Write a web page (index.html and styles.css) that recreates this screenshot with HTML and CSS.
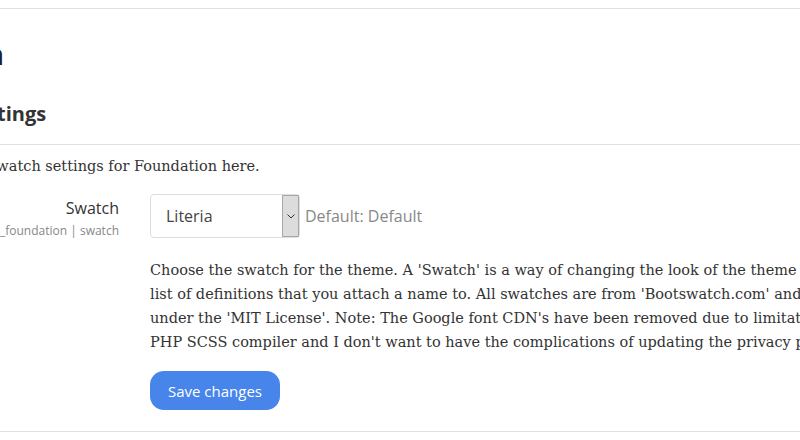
FILE: index.html
```html
<!DOCTYPE html>
<html lang="en">
<head>
  <meta charset="UTF-8" />
  <meta name="viewport" content="width=device-width, initial-scale=1.0"/>
  <title>Foundation - Swatch settings</title>
  <link rel="stylesheet" href="styles.css">
</head>
<body>

  <div class="pagina">
    <h2 class="titulo">Foundation</h2>

    <h3 class="subtitulo">Swatch settings</h3>
    <div class="intro">
      <p>Configure the swatch settings for Foundation here.</p>
    </div>

    <div class="fila">
      <div class="etiqueta">
        <label for="swatch">Swatch</label>
        <span class="nombre">theme_foundation | swatch</span>
      </div>
      <div class="control">
        <div class="campo">
          <div class="selector" id="swatch">
            <span class="valor">Literia</span>
            <span class="flecha">
              <svg width="8" height="5" viewBox="0 0 8 5"><path d="M0.5 0.5 L4 4 L7.5 0.5" fill="none" stroke="#333" stroke-width="1"/></svg>
            </span>
          </div>
          <span class="defecto">Default: Default</span>
        </div>
        <p class="descripcion">
          Choose the swatch for the theme. A 'Swatch' is a way of changing the look of the theme using a preset<br>
          list of definitions that you attach a name to. All swatches are from 'Bootswatch.com' and licensed<br>
          under the 'MIT License'. Note: The Google font CDN's have been removed due to limitations of the<br>
          PHP SCSS compiler and I don't want to have the complications of updating the privacy policy.
        </p>
      </div>
    </div>

    <div class="fila acciones">
      <div></div>
      <div>
        <button>Save changes</button>
      </div>
    </div>
  </div>

</body>
</html>
```

FILE: styles.css
```css
html, body {
  overflow: hidden;
}

body {
  margin: 0;
  font-family: 'Open Sans', sans-serif;
  color: #333;
  background: white;
}

.pagina {
  margin-top: 8px;
  margin-left: -117px;
  width: 1100px;
  border-top: 1px solid #dee2e6;
  border-bottom: 1px solid #dee2e6;
}

.titulo {
  margin: 26px 0 0 -34px;
  font-size: 28px;
  font-weight: 600;
  color: #1d2125;
}

.subtitulo {
  margin: 27px 0 0 6px;
  font-size: 20px;
  font-weight: 700;
  color: #333;
}

.intro {
  margin-top: 17px;
  border-top: 1px solid #dee2e6;
  padding-top: 9px;
}

.intro p, .descripcion {
  margin: 0;
  font-family: 'DejaVu Serif', serif;
  font-size: 14.5px;
  line-height: 24px;
  color: #333;
}

.fila {
  display: grid;
  grid-template-columns: 236px 1fr;
  column-gap: 31px;
  margin-top: 16px;
}

.etiqueta {
  display: flex;
  flex-direction: column;
  align-items: flex-end;
  padding-top: 3px;
}

.etiqueta label {
  font-size: 16px;
  color: #333;
}

.nombre {
  font-size: 12px;
  color: #888;
  margin-top: 3px;
}

.campo {
  display: flex;
  align-items: center;
  gap: 5px;
}

.selector {
  display: flex;
  width: 148px;
  height: 42px;
  border: 1px solid #ddd;
  border-radius: 4px;
}

.valor {
  flex: 1;
  padding-left: 15px;
  line-height: 42px;
  font-size: 16px;
  color: #444;
}

.flecha {
  width: 15px;
  background-color: #dcdcdc;
  border: 1px solid #a8a8a8;
  display: flex;
  align-items: center;
  justify-content: center;
}

.defecto {
  font-size: 16px;
  color: #888;
}

.descripcion {
  margin-top: 20px;
  white-space: nowrap;
}

.acciones {
  margin-top: 0;
  padding: 17px 0 21px 0;
}

.acciones button {
  background-color: #4785ea;
  color: white;
  border: none;
  border-radius: 14px;
  padding: 0 18px;
  height: 39px;
  font-family: 'Open Sans', sans-serif;
  font-size: 15px;
  cursor: pointer;
}
```
